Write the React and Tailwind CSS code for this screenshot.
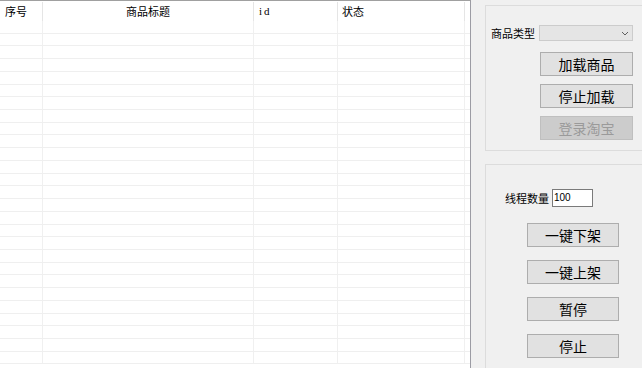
import React from 'react';

const cols = [
  { w: 'w-[43px]', label: '序号', align: 'justify-start pl-[5px]' },
  { w: 'w-[211px]', label: '商品标题', align: 'justify-center' },
  { w: 'w-[84px]', label: 'id', align: 'justify-start pl-[5px]', serif: true },
  { w: 'w-[127px]', label: '状态', align: 'justify-start pl-[4px]' },
];

const rows = Array.from({ length: 27 });

function WinButton({ children, disabled, className }) {
  return (
    <button
      type="button"
      disabled={disabled}
      className={
        'h-[24px] shrink-0 flex items-center justify-center border text-[14px] leading-none ' +
        (disabled
          ? 'bg-[#cccccc] border-[#bfbfbf] text-[#9a9a9a] '
          : 'bg-[#e1e1e1] border-[#adadad] text-black ') +
        className
      }
    >
      {children}
    </button>
  );
}

export default function App() {
  return (
    <div
      className="w-[642px] h-[368px] overflow-hidden flex bg-[#f0f0f0] text-black"
      style={{ fontFamily: '"Noto Sans CJK SC", "Noto Sans", sans-serif' }}
    >
      {/* goods list */}
      <div className="w-[471px] shrink-0 h-full bg-white border-t border-t-[#a0a0a0] border-r border-r-[#9c9ca4] flex flex-col overflow-hidden">
        <div className="flex h-[20px] shrink-0 pt-[1px]">
          {cols.map((c) => (
            <div
              key={c.label}
              className={`${c.w} shrink-0 h-full flex items-center ${c.align} border-r border-[#e5e5e5] text-[11px] leading-none`}
              style={c.serif ? { fontFamily: '"Liberation Serif", serif', letterSpacing: '2px' } : undefined}
            >
              {c.label}
            </div>
          ))}
        </div>
        <div className="flex flex-col">
          {rows.map((_, i) => (
            <div key={i} className="flex h-[12.73px] shrink-0 border-b border-[#efefef]">
              {cols.map((c) => (
                <div key={c.label} className={`${c.w} shrink-0 h-full border-r border-[#f0f0f0]`} />
              ))}
            </div>
          ))}
        </div>
      </div>

      {/* control panel */}
      <div className="w-[200px] shrink-0 pl-[14px] pt-[5px] flex flex-col items-start gap-[13px]">
        <div className="w-[175px] h-[146px] shrink-0 border border-[#dcdcdc]">
          <div className="flex items-center pl-[5px] pt-[19px]">
            <span className="text-[11px] leading-none w-[48px] shrink-0">商品类型</span>
            <div className="w-[94px] h-[16px] shrink-0 bg-[#e5e5e5] border border-[#cccccc] flex items-center justify-end pr-[3px]">
              <svg width="8" height="5" viewBox="0 0 8 5">
                <path d="M1 1 L4 4 L7 1" fill="none" stroke="#606060" strokeWidth="1" />
              </svg>
            </div>
          </div>
          <div className="flex flex-col gap-[8px] pl-[54px] pt-[11px]">
            <WinButton className="w-[93px]">加载商品</WinButton>
            <WinButton className="w-[93px]">停止加载</WinButton>
            <WinButton className="w-[93px]" disabled>登录淘宝</WinButton>
          </div>
        </div>

        <div className="w-[175px] h-[230px] shrink-0 border border-[#dcdcdc]">
          <div className="flex items-center pl-[19px] pt-[24px]">
            <span className="text-[11px] leading-none w-[47px] shrink-0">线程数量</span>
            <div
              className="w-[41px] h-[18px] shrink-0 bg-white border border-[#7a7a7a] flex items-center pl-[1px] text-[10px] leading-none"
              style={{ fontFamily: '"Liberation Sans", sans-serif' }}
            >
              100
            </div>
          </div>
          <div className="flex flex-col gap-[13px] pl-[41px] pt-[16px]">
            <WinButton className="w-[92px]">一键下架</WinButton>
            <WinButton className="w-[92px]">一键上架</WinButton>
            <WinButton className="w-[92px]">暂停</WinButton>
            <WinButton className="w-[92px]">停止</WinButton>
          </div>
        </div>
      </div>
    </div>
  );
}
